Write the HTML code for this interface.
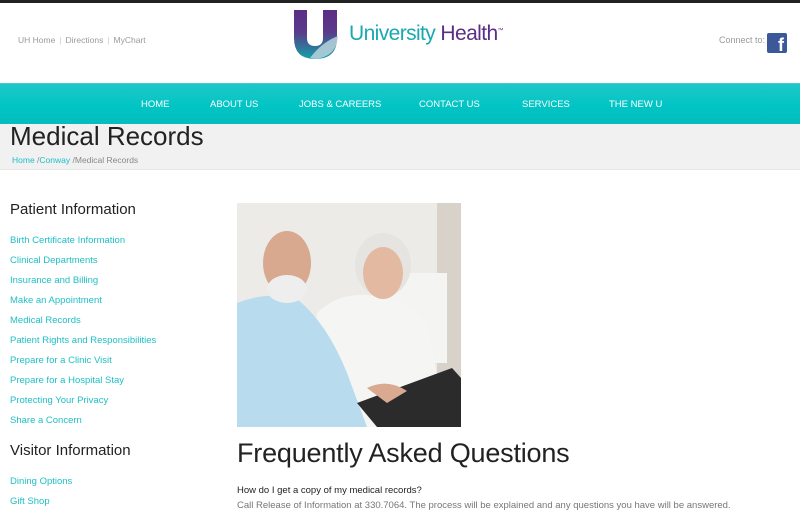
<!DOCTYPE html>
<html><head><meta charset="utf-8"><style>
*{margin:0;padding:0;box-sizing:border-box}
body{width:800px;height:512px;overflow:hidden;background:#fff;font-family:"Liberation Sans",Arial,sans-serif;position:relative}
.a{position:absolute;white-space:nowrap}
.top{left:0;top:0;width:800px;height:3px;background:#222}
.util{top:35px;left:18px;font-size:8.5px;color:#9a9a9a}
.util span{color:#ccc;margin:0 4px}
.nav{left:0;top:83px;width:800px;height:41px;background:linear-gradient(#1ec8c8,#00c4c4 60%,#06bcbc);border-top:1px solid #4cc;}
.nav span{position:absolute;top:15px;font-size:9.5px;color:#fff}
.band{left:0;top:124px;width:800px;height:46px;background:#f1f1f1;border-bottom:1px solid #e6e6e6}
.side{left:10px;font-size:9.5px;color:#1ec0c6}
</style></head><body>
<div class="a top"></div>
<div class="a util">UH Home<span>|</span>Directions<span>|</span>MyChart</div>
<svg class="a" style="left:292px;top:10px" width="48" height="50" viewBox="0 0 48 50">
<defs><linearGradient id="g" x1="0" y1="0" x2="0" y2="1"><stop offset="0" stop-color="#5b2d86"/><stop offset=".45" stop-color="#5a3a8a"/><stop offset="1" stop-color="#13a0a8"/></linearGradient></defs>
<path d="M2 0H15V28Q15 36 23 36Q31 36 31 28V0H45V28Q45 49 23 49Q2 49 2 28Z" fill="url(#g)"/>
<path d="M18 48Q30 32 46 26Q45 46 24 49Z" fill="#b9d3dc" opacity=".85"/>
</svg>
<div class="a" style="left:349px;top:22px;font-size:21px;color:#1aa8b3;letter-spacing:-.6px">University <span style="color:#5b2d86">Health</span><sup style="font-size:6px;color:#5b2d86">™</sup></div>
<div class="a" style="left:719px;top:35px;font-size:9px;color:#9a9a9a">Connect to:</div>
<div class="a" style="left:767px;top:33px;width:20px;height:20px;background:#3b5998;border-radius:2px;color:#fff;font-weight:bold;font-size:18px;text-align:right;padding-right:3px;line-height:24px;overflow:hidden">f</div>
<div class="a nav"><span style="left:141px">HOME</span><span style="left:210px">ABOUT US</span><span style="left:299px">JOBS &amp; CAREERS</span><span style="left:419px">CONTACT US</span><span style="left:522px">SERVICES</span><span style="left:609px">THE NEW U</span></div>
<div class="a band"></div>
<div class="a" style="left:10px;top:121px;font-size:26px;color:#222">Medical Records</div>
<div class="a" style="left:12px;top:155px;font-size:8.5px;color:#888"><span style="color:#1ec0c6">Home</span> /<span style="color:#1ec0c6">Conway</span> /Medical Records</div>
<div class="a" style="left:10px;top:201px;font-size:15px;color:#222">Patient Information</div>
<div class="a side" style="top:235px">Birth Certificate Information</div>
<div class="a side" style="top:255px">Clinical Departments</div>
<div class="a side" style="top:275px">Insurance and Billing</div>
<div class="a side" style="top:295px">Make an Appointment</div>
<div class="a side" style="top:315px">Medical Records</div>
<div class="a side" style="top:335px">Patient Rights and Responsibilities</div>
<div class="a side" style="top:355px">Prepare for a Clinic Visit</div>
<div class="a side" style="top:375px">Prepare for a Hospital Stay</div>
<div class="a side" style="top:395px">Protecting Your Privacy</div>
<div class="a side" style="top:415px">Share a Concern</div>
<div class="a" style="left:10px;top:442px;font-size:15px;color:#222">Visitor Information</div>
<div class="a side" style="top:476px">Dining Options</div>
<div class="a side" style="top:496px">Gift Shop</div>
<svg class="a" style="left:237px;top:203px" width="224" height="224" viewBox="0 0 224 224">
<rect width="224" height="224" fill="#ecebe8"/>
<rect x="200" y="0" width="24" height="224" fill="#d8d2ca"/>
<rect x="140" y="70" width="70" height="90" fill="#f4f4f2"/>
<path d="M80 110Q100 90 130 92Q170 95 190 120L210 224H70Z" fill="#f5f5f3"/>
<ellipse cx="146" cy="62" rx="28" ry="32" fill="#e6e4e0"/>
<ellipse cx="146" cy="70" rx="20" ry="26" fill="#e3b9a2"/>
<path d="M0 100Q30 88 60 96Q90 120 110 170L130 224H0Z" fill="#b8dcee"/>
<ellipse cx="50" cy="60" rx="24" ry="32" fill="#d8a98f"/>
<ellipse cx="50" cy="86" rx="20" ry="14" fill="#eeeeee"/>
<path d="M120 200L215 165L224 175V224H140Z" fill="#2b2b2b"/>
<path d="M130 185Q150 175 170 188L150 200Z" fill="#d9aa90"/>
</svg>
<div class="a" style="left:237px;top:438px;font-size:27px;color:#222;letter-spacing:-.2px">Frequently Asked Questions</div>
<div class="a" style="left:237px;top:485px;font-size:9.5px;color:#222">How do I get a copy of my medical records?</div>
<div class="a" style="left:237px;top:500px;font-size:9.5px;color:#777">Call Release of Information at 330.7064. The process will be explained and any questions you have will be answered.</div>
</body></html>
